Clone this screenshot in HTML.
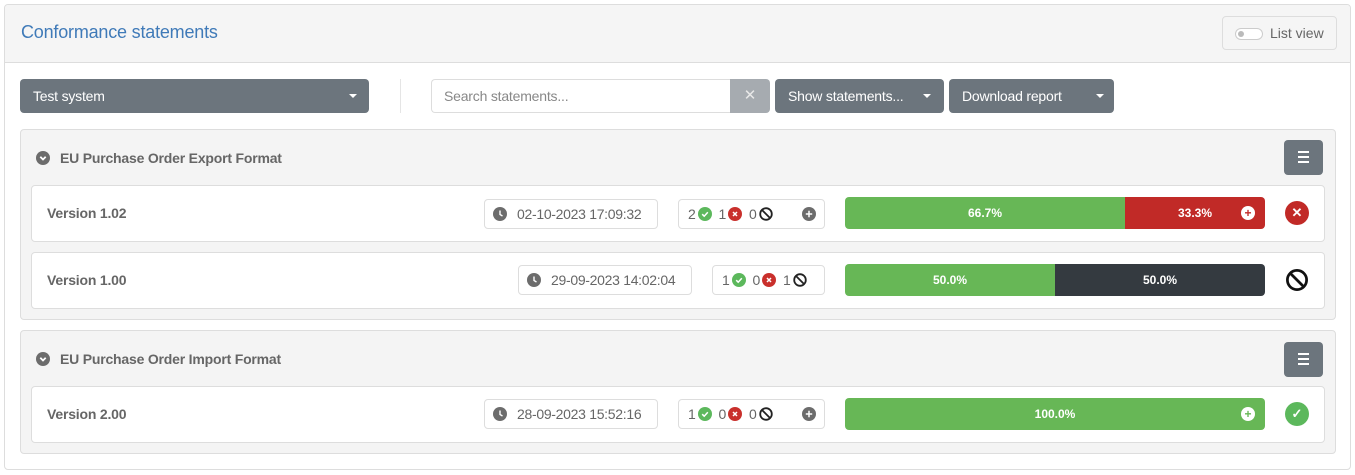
<!DOCTYPE html>
<html><head><meta charset="utf-8">
<style>
*{box-sizing:border-box;margin:0;padding:0}
body{width:1355px;height:475px;background:#fff;font-family:"Liberation Sans",sans-serif;font-size:14px;color:#555;position:relative;overflow:hidden}
.a{position:absolute}
.panel{left:4px;top:4px;width:1347px;height:466px;border:1px solid #ddd;border-radius:4px;overflow:hidden}
.phead{left:0;top:0;width:100%;height:58px;background:#f5f5f5;border-bottom:1px solid #ddd}
.title{left:16px;top:17px;font-size:18px;color:#3f7ab8;letter-spacing:-0.2px}
.lv{left:1217px;top:11px;width:115px;height:34px;border:1px solid #ddd;border-radius:4px;background:#f5f5f5}
.btn{background:#6c757d;color:#fff;border-radius:4px;height:34px;line-height:34px;padding-left:13px;font-size:14px;letter-spacing:-0.2px}
.caret{position:absolute;top:15px;width:0;height:0;border-left:4px solid transparent;border-right:4px solid transparent;border-top:4px solid #fff}
.grp{left:20px;width:1316px;background:#f4f4f4;border:1px solid #ddd;border-radius:4px}
.gt{font-weight:bold;color:#666;font-size:14px;letter-spacing:-0.2px}
.ham{width:39px;height:35px;background:#6c757d;border-radius:4px}
.ham i{position:absolute;left:14px;width:11px;height:2px;background:#fff}
.row{left:31px;width:1294px;height:57px;background:#fff;border:1px solid #ddd;border-radius:4px}
.ver{left:15px;top:19px;font-weight:bold;color:#666;letter-spacing:-0.2px}
.box{height:30px;border:1px solid #ddd;border-radius:4px;background:#fff;line-height:28px;color:#666;font-size:14px;letter-spacing:-0.3px}
.bar{height:32px;border-radius:4px;overflow:hidden;color:#fff;font-weight:bold;font-size:12px;line-height:32px;text-align:center}
.ic{display:inline-block;width:14px;height:14px;vertical-align:-2px;margin-left:2px;margin-right:7px}
</style></head><body>
<svg width="0" height="0" style="position:absolute">
<defs>
<symbol id="ok" viewBox="0 0 14 14"><circle cx="7" cy="7" r="7" fill="#5cb85c"/><path d="M4.2 7.2l2 2 3.6-4" stroke="#fff" stroke-width="1.5" fill="none"/></symbol>
<symbol id="er" viewBox="0 0 14 14"><circle cx="7" cy="7" r="7" fill="#c9302c"/><path d="M5 5l4 4M9 5l-4 4" stroke="#fff" stroke-width="1.5"/></symbol>
<symbol id="na" viewBox="0 0 14 14"><circle cx="7" cy="7" r="5.8" fill="none" stroke="#222" stroke-width="1.8"/><path d="M3 3l8 8" stroke="#222" stroke-width="1.8"/></symbol>
<symbol id="clk" viewBox="0 0 14 14"><circle cx="7" cy="7" r="7" fill="#6c6c6c"/><path d="M7 3.5V7.5l2.5 1.5" stroke="#fff" stroke-width="1.4" fill="none"/></symbol>
<symbol id="pl" viewBox="0 0 14 14"><circle cx="7" cy="7" r="7" fill="#6c6c6c"/><path d="M7 3.8v6.4M3.8 7h6.4" stroke="#fff" stroke-width="1.5"/></symbol>
<symbol id="chev" viewBox="0 0 14 14"><circle cx="7" cy="7" r="7" fill="#6c6c6c"/><path d="M4.3 5.8L7 8.5l2.7-2.7" stroke="#fff" stroke-width="1.8" fill="none"/></symbol>
</defs></svg>
<div class="a panel">
 <div class="a phead"></div>
 <div class="a title">Conformance statements</div>
 <div class="a lv">
  <div class="a" style="left:12px;top:11px;width:28px;height:12px;border:1px solid #ccc;border-radius:6px;background:#fff"><div class="a" style="left:2px;top:2px;width:6px;height:6px;border-radius:50%;background:#bbb"></div></div>
  <div class="a" style="left:47px;top:8px;color:#666;font-size:14px">List view</div>
 </div>
</div>

<div class="a btn" style="left:20px;top:79px;width:349px">Test system<span class="caret" style="left:329px"></span></div>
<div class="a" style="left:400px;top:79px;width:1px;height:34px;background:#e5e5e5"></div>
<div class="a" style="left:431px;top:79px;width:300px;height:34px;border:1px solid #ddd;border-right:none;border-radius:4px 0 0 4px;line-height:32px;padding-left:12px;color:#888;letter-spacing:-0.2px">Search statements...</div>
<div class="a" style="left:730px;top:79px;width:40px;height:34px;background:#a6abb0;border-radius:0 4px 4px 0;color:#e8e8e8;text-align:center;line-height:34px;font-size:15px">✕</div>
<div class="a btn" style="left:775px;top:79px;width:169px">Show statements...<span class="caret" style="left:148px"></span></div>
<div class="a btn" style="left:949px;top:79px;width:165px">Download report<span class="caret" style="left:147px"></span></div>

<!-- group 1 -->
<div class="a grp" style="top:129px;height:191px"></div>
<svg class="a" style="left:36px;top:151px" width="14" height="14"><use href="#chev"/></svg>
<div class="a gt" style="left:60px;top:150px">EU Purchase Order Export Format</div>
<div class="a ham" style="left:1284px;top:140px"><i style="top:11px"></i><i style="top:16px"></i><i style="top:21px"></i></div>

<div class="a row" style="top:185px"><div class="a ver">Version 1.02</div></div>
<div class="a box" style="left:484px;top:199px;width:174px;padding-left:32px">02-10-2023 17:09:32</div>
<svg class="a" style="left:493px;top:207px" width="14" height="14"><use href="#clk"/></svg>
<div class="a box" style="left:678px;top:199px;width:147px;padding-left:9px">2<svg class="ic"><use href="#ok"/></svg>1<svg class="ic"><use href="#er"/></svg>0<svg class="ic"><use href="#na"/></svg></div>
<svg class="a" style="left:802px;top:207px" width="14" height="14"><use href="#pl"/></svg>
<div class="a bar" style="left:845px;top:197px;width:420px;display:flex"><div style="width:280px;background:#67b756">66.7%</div><div style="flex:1;background:#c12a27;position:relative">33.3%<span style="position:absolute;right:10px;top:9px;width:14px;height:14px;border-radius:50%;background:#fff;color:#c12a27;line-height:14px;font-size:12px">+</span></div></div>
<div class="a" style="left:1285px;top:201px;width:24px;height:24px;border-radius:50%;background:#c12a27;color:#fff;text-align:center;line-height:24px;font-weight:bold;font-size:13px">✕</div>

<div class="a row" style="top:252px"><div class="a ver">Version 1.00</div></div>
<div class="a box" style="left:518px;top:265px;width:174px;padding-left:32px">29-09-2023 14:02:04</div>
<svg class="a" style="left:527px;top:273px" width="14" height="14"><use href="#clk"/></svg>
<div class="a box" style="left:712px;top:265px;width:113px;padding-left:9px">1<svg class="ic"><use href="#ok"/></svg>0<svg class="ic"><use href="#er"/></svg>1<svg class="ic"><use href="#na"/></svg></div>
<div class="a bar" style="left:845px;top:264px;width:420px;display:flex"><div style="width:210px;background:#67b756">50.0%</div><div style="flex:1;background:#343a40">50.0%</div></div>
<svg class="a" style="left:1285px;top:268px" width="24" height="24" viewBox="0 0 14 14"><circle cx="7" cy="7" r="5.6" fill="none" stroke="#111" stroke-width="1.6"/><path d="M3 3l8 8" stroke="#111" stroke-width="1.6"/></svg>

<!-- group 2 -->
<div class="a grp" style="top:330px;height:124px"></div>
<svg class="a" style="left:36px;top:352px" width="14" height="14"><use href="#chev"/></svg>
<div class="a gt" style="left:60px;top:351px">EU Purchase Order Import Format</div>
<div class="a ham" style="left:1284px;top:342px"><i style="top:11px"></i><i style="top:16px"></i><i style="top:21px"></i></div>

<div class="a row" style="top:386px"><div class="a ver">Version 2.00</div></div>
<div class="a box" style="left:484px;top:399px;width:174px;padding-left:32px">28-09-2023 15:52:16</div>
<svg class="a" style="left:493px;top:407px" width="14" height="14"><use href="#clk"/></svg>
<div class="a box" style="left:678px;top:399px;width:147px;padding-left:9px">1<svg class="ic"><use href="#ok"/></svg>0<svg class="ic"><use href="#er"/></svg>0<svg class="ic"><use href="#na"/></svg></div>
<svg class="a" style="left:802px;top:407px" width="14" height="14"><use href="#pl"/></svg>
<div class="a bar" style="left:845px;top:398px;width:420px;background:#67b756;position:absolute">100.0%<span style="position:absolute;right:10px;top:9px;width:14px;height:14px;border-radius:50%;background:#fff;color:#67b756;line-height:14px;font-size:12px">+</span></div>
<div class="a" style="left:1285px;top:402px;width:24px;height:24px;border-radius:50%;background:#5cb85c;color:#fff;text-align:center;line-height:24px;font-weight:bold;font-size:13px">✓</div>
</body></html>
